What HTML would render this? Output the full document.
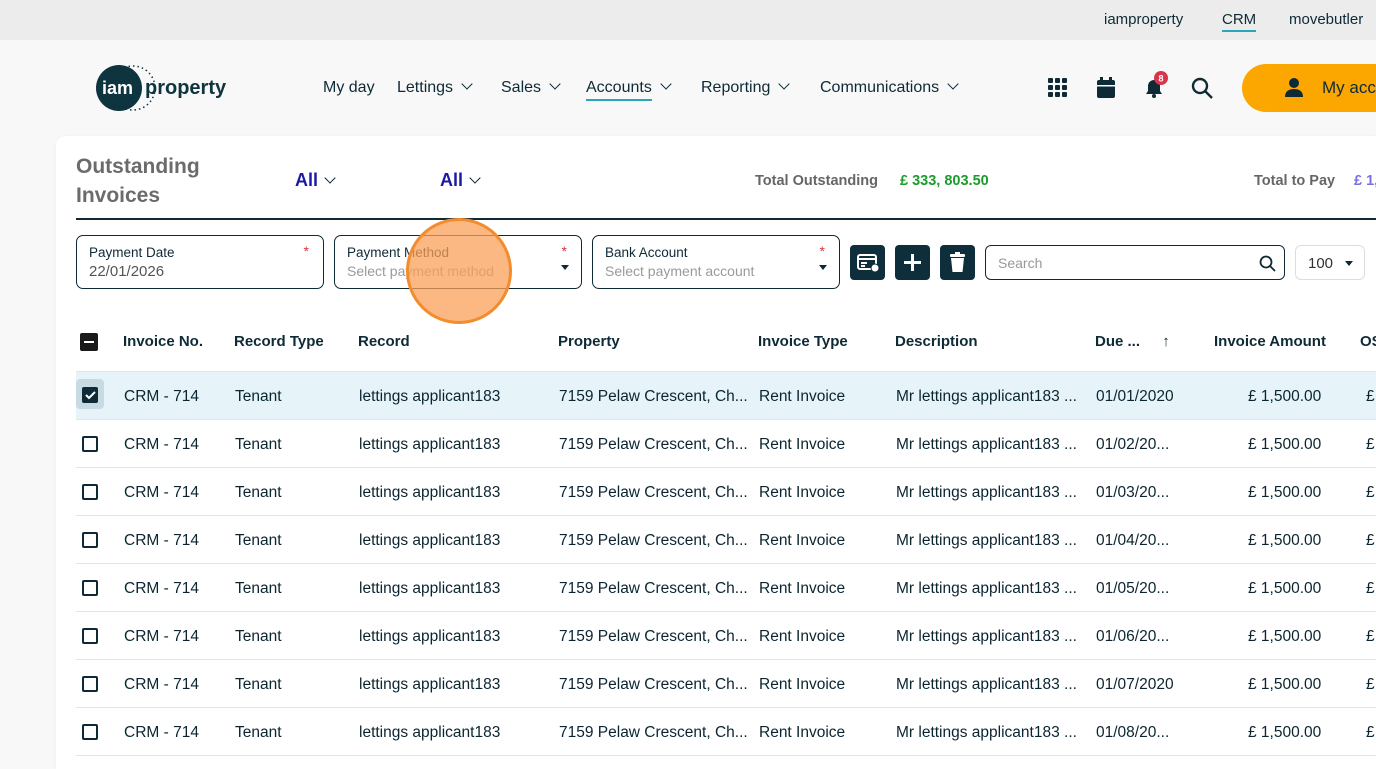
<!DOCTYPE html>
<html><head><meta charset="utf-8"><style>
*{box-sizing:border-box;margin:0;padding:0}
body{width:1376px;height:769px;overflow:hidden;background:#f8f8f8;font-family:"Liberation Sans",sans-serif;color:#0e2a36;position:relative}
.top{position:absolute;left:0;top:0;width:1376px;height:40px;background:#ececec;font-size:15px}
.top span{position:absolute;top:11px}
.abs{position:absolute;white-space:nowrap}
.nav{font-size:16px;top:79px}
.chev{display:inline-block;width:8px;height:8px;border-right:1.6px solid #0e2a36;border-bottom:1.6px solid #0e2a36;transform:rotate(45deg);margin-left:10px;position:relative;top:-4px}
.card{position:absolute;left:56px;top:136px;width:1330px;height:633px;background:#fff;border-radius:10px 10px 0 0;box-shadow:0 0 4px rgba(0,0,0,.04)}
.field{position:absolute;top:235px;height:54px;border:1px solid #0e2a36;border-radius:7px;background:#fff}
.field .l{position:absolute;left:12px;top:9px;font-size:13.5px;color:#0e2a36}
.field .v{position:absolute;left:12px;top:27px;font-size:14px;color:#9a9a9a}
.field .s{position:absolute;right:14px;top:7px;color:#d33;font-size:14px}
.field .a{position:absolute;right:12px;top:29px;width:0;height:0;border-left:4px solid transparent;border-right:4px solid transparent;border-top:5px solid #0e2a36}
.btn{position:absolute;top:245px;width:35px;height:35px;background:#0e2e3b;border-radius:4px}
.th{position:absolute;top:333px;font-size:15px;font-weight:bold}
.row{position:absolute;left:76px;width:1300px;height:48px;border-bottom:1px solid #e3e6e8;font-size:15.5px;color:#0a2530}
.row span{position:absolute;top:16px;white-space:nowrap}
.cb{position:absolute;left:6px;top:16px;width:16px;height:16px;border:2px solid #0e2a36;border-radius:2px}
</style></head><body>
<div class="top"><span style="left:1104px">iamproperty</span><span style="left:1222px;border-bottom:2px solid #2aa6b8;padding-bottom:2px">CRM</span><span style="left:1289px">movebutler</span></div>
<svg class="abs" style="left:96px;top:64px" width="135" height="48"><circle cx="23" cy="24" r="23" fill="#0e3440"/><circle cx="37" cy="24" r="22" fill="none" stroke="#0e3440" stroke-width="1.5" stroke-dasharray="1.5 3"/><text x="6" y="30" fill="#fff" font-family="Liberation Sans" font-size="18" font-weight="bold">iam</text><text x="49" y="30" fill="#0e3440" font-family="Liberation Sans" font-size="20" font-weight="bold">property</text></svg>
<div class="abs nav" style="left:323px">My day</div>
<div class="abs nav" style="left:397px">Lettings<i class="chev"></i></div>
<div class="abs nav" style="left:501px">Sales<i class="chev"></i></div>
<div class="abs nav" style="left:586px"><span style="border-bottom:2px solid #2aa6b8;padding-bottom:3px">Accounts</span><i class="chev"></i></div>
<div class="abs nav" style="left:701px">Reporting<i class="chev"></i></div>
<div class="abs nav" style="left:820px">Communications<i class="chev"></i></div>
<svg class="abs" style="left:1048px;top:78px" width="20" height="20" fill="#0e2a36"><rect x="0" y="0" width="5" height="5" rx="1"/><rect x="7" y="0" width="5" height="5" rx="1"/><rect x="14" y="0" width="5" height="5" rx="1"/><rect x="0" y="7" width="5" height="5" rx="1"/><rect x="7" y="7" width="5" height="5" rx="1"/><rect x="14" y="7" width="5" height="5" rx="1"/><rect x="0" y="14" width="5" height="5" rx="1"/><rect x="7" y="14" width="5" height="5" rx="1"/><rect x="14" y="14" width="5" height="5" rx="1"/></svg>
<svg class="abs" style="left:1096px;top:77px" width="20" height="22" fill="#0e2a36"><rect x="1" y="3" width="18" height="18" rx="2"/><rect x="4" y="0" width="3" height="5"/><rect x="13" y="0" width="3" height="5"/><rect x="1" y="8" width="18" height="1.5" fill="#fff"/></svg>
<svg class="abs" style="left:1143px;top:70px" width="30" height="30"><path d="M11 10a6 6 0 0 1 6 6v5l2 3H3l2-3v-5a6 6 0 0 1 6-6z" fill="#0e2a36"/><circle cx="11" cy="26" r="2" fill="#0e2a36"/><circle cx="18" cy="8" r="7" fill="#d9344a"/><text x="18" y="11.5" fill="#fff" font-size="9" font-weight="bold" text-anchor="middle" font-family="Liberation Sans">8</text></svg>
<svg class="abs" style="left:1191px;top:77px" width="24" height="24" fill="none" stroke="#0e2a36" stroke-width="2.4"><circle cx="9" cy="9" r="7"/><path d="M14 14l7 7"/></svg>
<div class="abs" style="left:1242px;top:64px;width:160px;height:48px;background:#fba700;border-radius:24px"></div>
<svg class="abs" style="left:1284px;top:77px" width="20" height="20" fill="#0e2a36"><circle cx="10" cy="6" r="5"/><path d="M1 20c0-6 4-8 9-8s9 2 9 8z"/></svg>
<div class="abs" style="left:1322px;top:78px;font-size:17px">My acc</div>
<div class="card"></div>
<div class="abs" style="left:76px;top:152px;font-size:21px;font-weight:bold;color:#6b6b6b;line-height:29px">Outstanding<br>Invoices</div>
<div class="abs" style="left:295px;top:170px;font-size:18px;font-weight:bold;color:#1a1aa6">All<i class="chev" style="margin-left:8px"></i></div>
<div class="abs" style="left:440px;top:170px;font-size:18px;font-weight:bold;color:#1a1aa6">All<i class="chev" style="margin-left:8px"></i></div>
<div class="abs" style="left:755px;top:173px;font-size:14.5px;font-weight:bold;color:#666">Total Outstanding</div>
<div class="abs" style="left:900px;top:173px;font-size:14.5px;font-weight:bold;color:#1c9c2c">£ 333, 803.50</div>
<div class="abs" style="left:1254px;top:173px;font-size:14.5px;font-weight:bold;color:#666">Total to Pay</div>
<div class="abs" style="left:1354px;top:173px;font-size:14.5px;font-weight:bold;color:#7a70e0">£ 1,</div>
<div class="abs" style="left:76px;top:218px;width:1300px;height:1.5px;background:#0e2a36"></div>
<div class="field" style="left:76px;width:248px"><div class="l">Payment Date</div><div class="v" style="color:#555;font-size:15px">22/01/2026</div><div class="s">*</div></div>
<div class="field" style="left:334px;width:248px"><div class="l">Payment Method</div><div class="v">Select payment method</div><div class="s">*</div><div class="a"></div></div>
<div class="field" style="left:592px;width:248px"><div class="l">Bank Account</div><div class="v">Select payment account</div><div class="s">*</div><div class="a"></div></div>
<div class="btn" style="left:850px"><svg width="35" height="35" fill="none" stroke="#fff" stroke-width="2"><rect x="8" y="10" width="18" height="14" rx="2"/><path d="M8 14h18M11 18h6M11 21h4"/><circle cx="25" cy="23" r="4" fill="#fff" stroke="#0e2e3b" stroke-width="1"/></svg></div>
<div class="btn" style="left:895px"><svg width="35" height="35" stroke="#fff" stroke-width="3"><path d="M17.5 9v17M9 17.5h17"/></svg></div>
<div class="btn" style="left:940px"><svg width="35" height="35" fill="#fff"><rect x="10" y="9" width="15" height="3" rx="1"/><rect x="15" y="7" width="5" height="3"/><path d="M11 13h13l-1.5 14h-10z"/></svg></div>
<div class="abs" style="left:985px;top:245px;width:300px;height:35px;border:1px solid #0e2a36;border-radius:6px"><span style="position:absolute;left:12px;top:9px;font-size:14px;color:#999">Search</span><svg style="position:absolute;right:8px;top:9px" width="17" height="17" fill="none" stroke="#0e2a36" stroke-width="1.8"><circle cx="7" cy="7" r="5.5"/><path d="M11 11l5 5"/></svg></div>
<div class="abs" style="left:1295px;top:245px;width:70px;height:35px;border:1px solid #ddd;border-radius:6px"><span style="position:absolute;left:12px;top:9px;font-size:15px;color:#333">100</span><span style="position:absolute;left:49px;top:15px;border-left:4px solid transparent;border-right:4px solid transparent;border-top:5px solid #0e2a36"></span></div>
<div class="abs" style="left:406px;top:218px;width:106px;height:106px;border-radius:50%;background:rgba(250,160,90,.75);border:3px solid #f28c2c"></div>
<div class="abs" style="left:80px;top:333px;width:18px;height:18px;background:#1a1a1a;border-radius:2px"><div style="position:absolute;left:4px;top:8px;width:10px;height:2px;background:#fff"></div></div>
<div class="th" style="left:123px">Invoice No.</div><div class="th" style="left:234px">Record Type</div><div class="th" style="left:358px">Record</div><div class="th" style="left:558px">Property</div><div class="th" style="left:758px">Invoice Type</div><div class="th" style="left:895px">Description</div><div class="th" style="left:1095px">Due ... <span style="margin-left:18px;font-weight:normal">↑</span></div><div class="th" style="left:1214px">Invoice Amount</div><div class="th" style="left:1360px">OS</div>
<div class="abs" style="left:76px;top:371px;width:1300px;height:1px;background:#e3e6e8"></div>
<div class="row" style="top:372px;background:#e6f4fa"><div style="position:absolute;left:0;top:7px;width:28px;height:30px;background:#c8dbe3;border-radius:4px"></div><div class="cb" style="background:#0e2a36;left:6px;top:15px"><svg width="12" height="12" style="position:absolute;left:0;top:0" fill="none" stroke="#fff" stroke-width="2"><path d="M2 6l3 3 6-6"/></svg></div>
<span style="left:48px">CRM - 714</span><span style="left:159px">Tenant</span><span style="left:283px">lettings applicant183</span><span style="left:483px">7159 Pelaw Crescent, Ch...</span><span style="left:683px">Rent Invoice</span><span style="left:820px">Mr lettings applicant183 ...</span><span style="left:1020px">01/01/2020</span><span style="left:1172px">£ 1,500.00</span><span style="left:1290px">£</span></div>
<div class="row" style="top:420px"><div class="cb"></div><span style="left:48px">CRM - 714</span><span style="left:159px">Tenant</span><span style="left:283px">lettings applicant183</span><span style="left:483px">7159 Pelaw Crescent, Ch...</span><span style="left:683px">Rent Invoice</span><span style="left:820px">Mr lettings applicant183 ...</span><span style="left:1020px">01/02/20...</span><span style="left:1172px">£ 1,500.00</span><span style="left:1290px">£</span></div>
<div class="row" style="top:468px"><div class="cb"></div><span style="left:48px">CRM - 714</span><span style="left:159px">Tenant</span><span style="left:283px">lettings applicant183</span><span style="left:483px">7159 Pelaw Crescent, Ch...</span><span style="left:683px">Rent Invoice</span><span style="left:820px">Mr lettings applicant183 ...</span><span style="left:1020px">01/03/20...</span><span style="left:1172px">£ 1,500.00</span><span style="left:1290px">£</span></div>
<div class="row" style="top:516px"><div class="cb"></div><span style="left:48px">CRM - 714</span><span style="left:159px">Tenant</span><span style="left:283px">lettings applicant183</span><span style="left:483px">7159 Pelaw Crescent, Ch...</span><span style="left:683px">Rent Invoice</span><span style="left:820px">Mr lettings applicant183 ...</span><span style="left:1020px">01/04/20...</span><span style="left:1172px">£ 1,500.00</span><span style="left:1290px">£</span></div>
<div class="row" style="top:564px"><div class="cb"></div><span style="left:48px">CRM - 714</span><span style="left:159px">Tenant</span><span style="left:283px">lettings applicant183</span><span style="left:483px">7159 Pelaw Crescent, Ch...</span><span style="left:683px">Rent Invoice</span><span style="left:820px">Mr lettings applicant183 ...</span><span style="left:1020px">01/05/20...</span><span style="left:1172px">£ 1,500.00</span><span style="left:1290px">£</span></div>
<div class="row" style="top:612px"><div class="cb"></div><span style="left:48px">CRM - 714</span><span style="left:159px">Tenant</span><span style="left:283px">lettings applicant183</span><span style="left:483px">7159 Pelaw Crescent, Ch...</span><span style="left:683px">Rent Invoice</span><span style="left:820px">Mr lettings applicant183 ...</span><span style="left:1020px">01/06/20...</span><span style="left:1172px">£ 1,500.00</span><span style="left:1290px">£</span></div>
<div class="row" style="top:660px"><div class="cb"></div><span style="left:48px">CRM - 714</span><span style="left:159px">Tenant</span><span style="left:283px">lettings applicant183</span><span style="left:483px">7159 Pelaw Crescent, Ch...</span><span style="left:683px">Rent Invoice</span><span style="left:820px">Mr lettings applicant183 ...</span><span style="left:1020px">01/07/2020</span><span style="left:1172px">£ 1,500.00</span><span style="left:1290px">£</span></div>
<div class="row" style="top:708px"><div class="cb"></div><span style="left:48px">CRM - 714</span><span style="left:159px">Tenant</span><span style="left:283px">lettings applicant183</span><span style="left:483px">7159 Pelaw Crescent, Ch...</span><span style="left:683px">Rent Invoice</span><span style="left:820px">Mr lettings applicant183 ...</span><span style="left:1020px">01/08/20...</span><span style="left:1172px">£ 1,500.00</span><span style="left:1290px">£</span></div>
</body></html>
